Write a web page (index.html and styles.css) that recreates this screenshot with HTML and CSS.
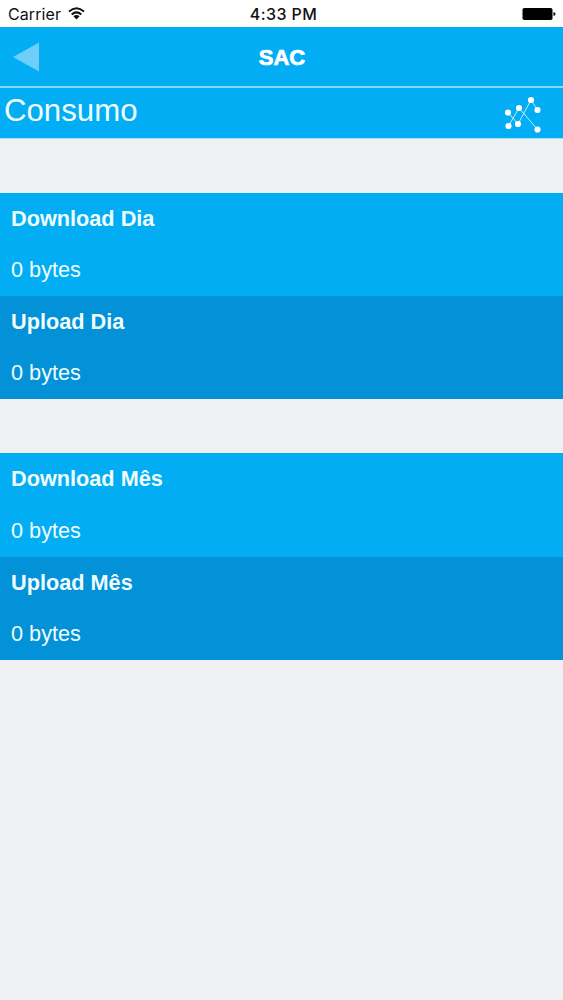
FILE: index.html
```html
<!DOCTYPE html>
<html lang="pt-BR">
<head>
  <meta charset="UTF-8">
  <meta name="viewport" content="width=device-width, initial-scale=1.0">
  <title>SAC - Consumo</title>
  <link rel="stylesheet" href="styles.css">
</head>
<body>
  <div class="status">
    <div class="carrier">
      <span>Carrier</span>
      <svg class="wifi" width="17" height="13" viewBox="0 0 17 13" fill="none" stroke="#111" stroke-width="2">
        <path d="M1 4.6 Q8.5 -2 16 4.6"/>
        <path d="M3.7 7.5 Q8.5 3.2 13.3 7.5"/>
        <path d="M8.5 12.4 L5.4 9.3 Q8.5 6.8 11.6 9.3 Z" fill="#111" stroke="none"/>
      </svg>
    </div>
    <span class="time">4:33 PM</span>
    <div class="battery">
      <svg width="34" height="14" viewBox="0 0 34 14">
        <rect x="0.5" y="1" width="30" height="12" rx="1.8" fill="#000"/>
        <path d="M31.5 5 Q33.5 5.3 33.5 7 Q33.5 8.7 31.5 9 Z" fill="#000"/>
      </svg>
    </div>
  </div>

  <header>
    <a class="back" href="#" aria-label="Voltar">
      <svg width="26" height="30" viewBox="0 0 26 30"><path d="M26 0.5 V29.5 L0 15 Z" fill="#6dcff9"/></svg>
    </a>
    <h1>SAC</h1>
  </header>

  <div class="section">
    <h2>Consumo</h2>
    <svg class="chart" width="38" height="38" viewBox="0 0 38 38">
      <g fill="none" stroke="#b9f1ff" stroke-width="1">
        <path d="M4 16.5 L14 28 L27 4 L33.5 14"/>
        <path d="M4.5 30 L15 12 L33.5 33.5"/>
      </g>
      <g fill="#fff">
        <circle cx="4" cy="16.5" r="3.1"/>
        <circle cx="4.5" cy="30" r="3.1"/>
        <circle cx="15" cy="12" r="3.1"/>
        <circle cx="14" cy="28" r="3.1"/>
        <circle cx="27" cy="4" r="3.1"/>
        <circle cx="33.5" cy="14" r="3.1"/>
        <circle cx="33.5" cy="33.5" r="3.1"/>
      </g>
    </svg>
  </div>

  <dl class="usage">
    <div class="item">
      <dt>Download Dia</dt>
      <dd>0 bytes</dd>
    </div>
    <div class="item dark">
      <dt>Upload Dia</dt>
      <dd>0 bytes</dd>
    </div>
  </dl>

  <dl class="usage">
    <div class="item">
      <dt>Download Mês</dt>
      <dd>0 bytes</dd>
    </div>
    <div class="item dark">
      <dt>Upload Mês</dt>
      <dd>0 bytes</dd>
    </div>
  </dl>
</body>
</html>
```
FILE: styles.css
```css
* { box-sizing: border-box; }
body { font-family: "Liberation Sans", Arial, sans-serif; margin: 0; background: #eff0f1; color: #effdff; }
h1, h2, dl, dd { margin: 0; }

.status { display: grid; grid-template-columns: 1fr auto 1fr; align-items: center; height: 27px; padding: 0 7px 0 8px; background: #fff; color: #111; font-family: Inter, "Liberation Sans", sans-serif; font-size: 16px; }
.carrier { display: flex; align-items: center; gap: 7px; letter-spacing: 0.1px; }
.wifi { margin-bottom: 1px; }
.time { padding-left: 3px; font-weight: 500; letter-spacing: 0.4px; }
.battery { display: flex; justify-content: flex-end; }

header { display: grid; grid-template-columns: 1fr auto 1fr; align-items: center; height: 61px; padding: 0 13px; background: #02adf3; border-bottom: 2px solid #83dbff; }
.back { display: flex; }
h1 { padding: 3px 0 0 1px; font-size: 22px; line-height: 26px; color: #fff; -webkit-text-stroke: 0.7px #fff; }

.section { display: flex; justify-content: space-between; height: 51px; padding: 4px 21px 0 4px; background: #02adf3; border-bottom: 1px solid #a5e5fb; }
h2 { font-size: 31.2px; font-weight: normal; line-height: 38px; }
.chart { margin-top: 4px; }

.usage { margin-top: 54px; }
.item { height: 103.2px; padding-left: 11px; background: #02adf3; font-size: 21.7px; line-height: 51.3px; }
.item.dark { background: #0391d7; }
dt { font-weight: bold; }
```
